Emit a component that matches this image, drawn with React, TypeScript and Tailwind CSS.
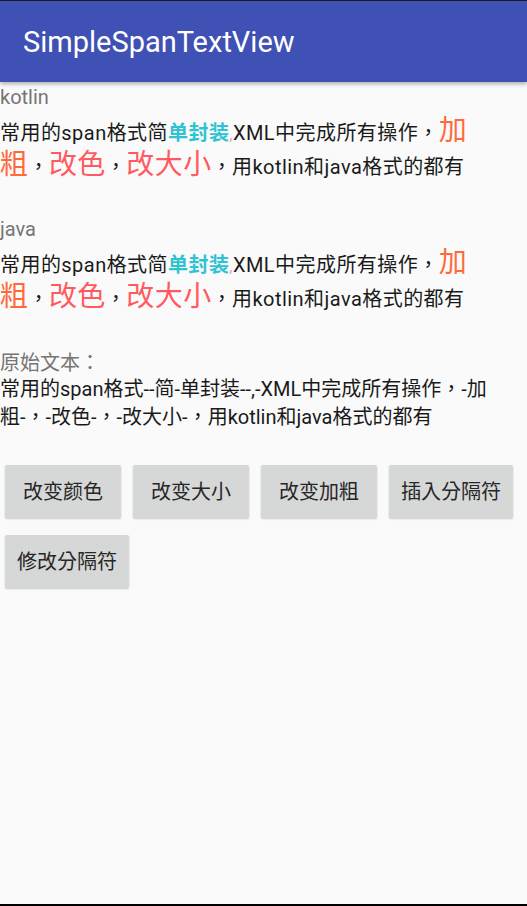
const FONT = { fontFamily: 'Roboto, "Noto Sans CJK TC", sans-serif' }

// RelativeSizeSpan(1.4) look-alike; each char is its own box so the line can still break between them
function Big({ text, color }: { text: string; color: string }) {
  return (
    <>
      {text.split('').map((ch, i) => (
        <span key={i} className={`inline-block text-[28px] leading-[30px] ${color}`}>
          {ch}
        </span>
      ))}
    </>
  )
}

function SpanParagraph() {
  return (
    <p className="mt-[7px] max-w-[495px] text-[20px] leading-[34px] tracking-[0.45px] text-[#1a1a1a]">
      常用的span格式简
      <span className="font-bold text-[#2ec3d3]">单封装</span>
      <span className="text-[16px] leading-none text-[#f59aae]">,</span>
      XML中完成所有操作，
      <Big text="加粗" color="text-[#ff6a3d]" />，
      <Big text="改色" color="text-[#ff5a5f]" />，
      <Big text="改大小" color="text-[#ff5a5f]" />
      ，用kotlin和java格式的都有
    </p>
  )
}

const BUTTONS = ['改变颜色', '改变大小', '改变加粗', '插入分隔符', '修改分隔符']

export default function App() {
  return (
    <div className="w-[527px] h-[906px] flex flex-col bg-[#fafafa] overflow-hidden" style={FONT}>
      <div className="h-px bg-[#1c1c28]" />
      <header className="h-[81px] bg-[#3f51b5] flex items-center pl-[23px] pt-[2px] shadow-[0_2px_4px_rgba(0,0,0,0.3)] z-10">
        <h1 className="text-white text-[29px] leading-none">SimpleSpanTextView</h1>
      </header>

      <main className="flex-1 pt-[3px]">
        <section className="mb-[33px]">
          <div className="text-[20px] leading-[24px] text-[#757575]">kotlin</div>
          <SpanParagraph />
        </section>

        <section className="mb-[35px]">
          <div className="text-[20px] leading-[24px] text-[#757575]">java</div>
          <SpanParagraph />
        </section>

        <section>
          <div className="text-[20px] leading-[24px] text-[#757575]">原始文本：</div>
          <p className="text-[20px] leading-[28px] text-[#1a1a1a]">
            常用的span格式--简-单封装--,-XML中完成所有操作，-加粗-，-改色-，-改大小-，用kotlin和java格式的都有
          </p>
        </section>

        <div className="flex flex-wrap gap-x-[12px] gap-y-[17px] pl-[5px] mt-[34px]">
          {BUTTONS.map((label) => (
            <button
              key={label}
              className="h-[53px] min-w-[116px] px-[12px] rounded-[2px] bg-[#d6d7d7] text-[20px] text-[#262626] shadow-[0_1px_2px_rgba(0,0,0,0.2)]"
            >
              {label}
            </button>
          ))}
        </div>
      </main>

      <div className="h-[2px] bg-black" />
    </div>
  )
}
